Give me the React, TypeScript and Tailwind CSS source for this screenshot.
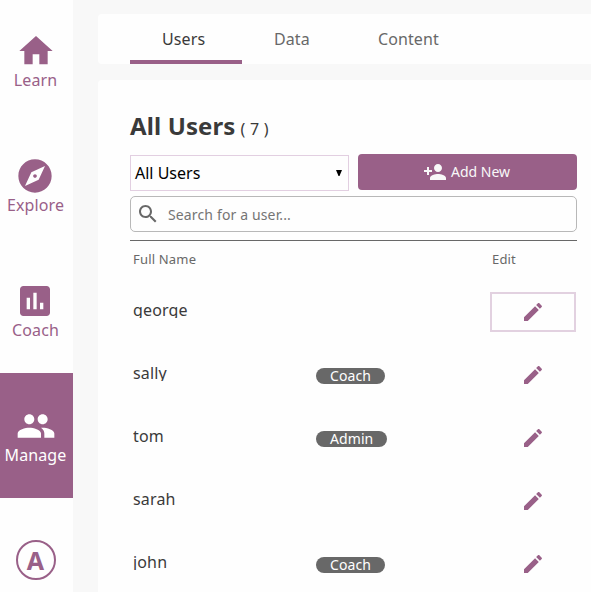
const paths = {
  home: 'M10 20v-6h4v6h5v-8h3L12 3 2 12h3v8z',
  explore:
    'M12 10.9c-.61 0-1.1.49-1.1 1.1s.49 1.1 1.1 1.1c.61 0 1.1-.49 1.1-1.1s-.49-1.1-1.1-1.1zM12 2C6.48 2 2 6.48 2 12s4.48 10 10 10 10-4.48 10-10S17.52 2 12 2zm2.19 12.19L6 18l3.81-8.19L18 6l-3.81 8.19z',
  chart:
    'M19 3H5c-1.1 0-2 .9-2 2v14c0 1.1.9 2 2 2h14c1.1 0 2-.9 2-2V5c0-1.1-.9-2-2-2zM9 17H7v-7h2v7zm4 0h-2V7h2v10zm4 0h-2v-4h2v4z',
  people:
    'M16 11c1.66 0 2.99-1.34 2.99-3S17.66 5 16 5c-1.66 0-3 1.34-3 3s1.34 3 3 3zm-8 0c1.66 0 2.99-1.34 2.99-3S9.66 5 8 5C6.34 5 5 6.34 5 8s1.34 3 3 3zm0 2c-2.33 0-7 1.17-7 3.5V19h14v-2.5c0-2.33-4.67-3.5-7-3.5zm8 0c-.29 0-.62.02-.97.05 1.16.84 1.97 1.97 1.97 3.45V19h6v-2.5c0-2.33-4.67-3.5-7-3.5z',
  addPerson:
    'M15 12c2.21 0 4-1.79 4-4s-1.79-4-4-4-4 1.79-4 4 1.79 4 4 4zm-9-2V7H4v3H1v2h3v3h2v-3h3v-2H6zm9 4c-2.67 0-8 1.34-8 4v2h16v-2c0-2.66-5.33-4-8-4z',
  search:
    'M15.5 14h-.79l-.28-.27C15.41 12.59 16 11.11 16 9.5 16 5.91 13.09 3 9.5 3S3 5.91 3 9.5 5.91 16 9.5 16c1.61 0 3.09-.59 4.23-1.57l.27.28v.79l5 4.99L20.49 19l-4.99-5zm-6 0C7.01 14 5 11.99 5 9.5S7.01 5 9.5 5 14 7.01 14 9.5 11.99 14 9.5 14z',
  pencil:
    'M3 17.25V21h3.75L17.81 9.94l-3.75-3.75L3 17.25zM20.71 7.04c.39-.39.39-1.02 0-1.41l-2.34-2.34c-.39-.39-1.02-.39-1.41 0l-1.83 1.83 3.75 3.75 1.83-1.83z',
};

function Icon({ name, className }: { name: keyof typeof paths; className: string }) {
  return (
    <svg viewBox="0 0 24 24" fill="currentColor" className={className}>
      <path d={paths[name]} />
    </svg>
  );
}

const nav: { label: string; icon: keyof typeof paths; active?: boolean; iconClass: string }[] = [
  { label: 'Learn', icon: 'home', iconClass: 'ml-4' },
  { label: 'Explore', icon: 'explore', iconClass: 'ml-[15px]' },
  { label: 'Coach', icon: 'chart', iconClass: 'ml-[15px]' },
  { label: 'Manage', icon: 'people', active: true, iconClass: 'ml-4' },
];

const users: { name: string; role?: string; focused?: boolean }[] = [
  { name: 'george', focused: true },
  { name: 'sally', role: 'Coach' },
  { name: 'tom', role: 'Admin' },
  { name: 'sarah' },
  { name: 'john', role: 'Coach' },
];

export default function App() {
  return (
    <div className="flex h-[592px] w-[591px] overflow-hidden bg-[#f8f8f8] font-['Noto_Sans',sans-serif] text-base text-[#3a3a3a]">
      <nav className="-mt-0.5 flex w-[73px] shrink-0 flex-col bg-[#fefefe] text-[#996088]">
        {nav.map((n) => (
          <div
            key={n.label}
            className={`flex h-[125px] shrink-0 flex-col pt-[33px] ${n.active ? 'bg-[#996088] text-white' : ''}`}
          >
            <Icon name={n.icon} className={`size-10 ${n.iconClass}`} />
            <span className="-mt-0.5 w-[71px] text-center leading-[22px] tracking-[0.12px]">{n.label}</span>
          </div>
        ))}
        <div className="mt-[42px] ml-4 flex size-10 shrink-0 items-center justify-center rounded-full border-2 border-[#996088] pr-px text-[25px] leading-none font-bold">
          A
        </div>
      </nav>
      <main className="ml-[25px] flex flex-1 flex-col gap-4 pt-3.5">
        <div className="flex h-[50px] shrink-0 rounded-l bg-[#fefefe] pl-8 tracking-[0.1px] text-[#686868]">
          <div className="w-28 border-b-4 border-[#996088] pt-[13px] pl-8 text-[#3a3a3a]">Users</div>
          <div className="w-[104px] pt-[13px] pl-8">Data</div>
          <div className="pt-[13px] pl-8">Content</div>
        </div>
        <section className="flex flex-1 flex-col rounded-tl bg-[#fefefe] pt-[28px] pr-3.5 pl-8">
          <h1 className="flex h-[46px] items-baseline gap-[5px] text-2xl leading-9 font-bold tracking-[0.12px]">
            All Users <span className="text-base font-normal tracking-[0.25px]">( 7 )</span>
          </h1>
          <div className="flex h-[37px] shrink-0 gap-[9px]">
            <div className="mt-px flex h-9 w-[219px] items-center justify-between border border-[#e2cfe1] pr-1.5 pl-1 text-black">
              All Users
              <svg viewBox="0 0 6 6" className="size-1.5" fill="currentColor">
                <path d="M0 0h6L3.5 6h-1z" />
              </svg>
            </div>
            <button className="flex h-9 w-[219px] items-center justify-center gap-1 rounded bg-[#996088] pr-0.5 text-sm text-[#f8f8f8]">
              <Icon name="addPerson" className="size-6" />
              Add New
            </button>
          </div>
          <div className="mt-[5px] flex h-9 shrink-0 items-center rounded-[5px] border border-[#b8b8b8] pl-[5px] text-sm tracking-[0.14px] text-[#757575]">
            <Icon name="search" className="mr-2 size-6 text-[#686868]" />
            <span className="pt-0.5">Search for a user...</span>
          </div>
          <div className="mt-2 flex h-[40px] shrink-0 border-t border-[#686868] pt-[9px] pl-[3px] text-[13px] leading-[18px] tracking-[0.18px] text-[#686868]">
            <span className="w-[359px]">Full Name</span>
            <span>Edit</span>
          </div>
          {users.map((u) => (
            <div key={u.name} className="flex h-[63px] shrink-0 pl-[3px]">
              <div className="mt-[22px] h-4 w-[183px] overflow-hidden leading-4 tracking-[0.15px]">{u.name}</div>
              <div className="w-[174px] pt-[25px]">
                {u.role && (
                  <span className="block h-4 w-fit rounded-full bg-[#686868] px-3.5 text-sm leading-4 tracking-[0.08px] text-white">
                    {u.role}
                  </span>
                )}
              </div>
              <div
                className={`mt-3 flex h-10 w-[86px] shrink-0 items-center justify-center border-2 text-[#996088] ${u.focused ? 'border-[#e2d1e0]' : 'border-transparent'}`}
              >
                <Icon name="pencil" className="size-6" />
              </div>
            </div>
          ))}
        </section>
      </main>
    </div>
  );
}
